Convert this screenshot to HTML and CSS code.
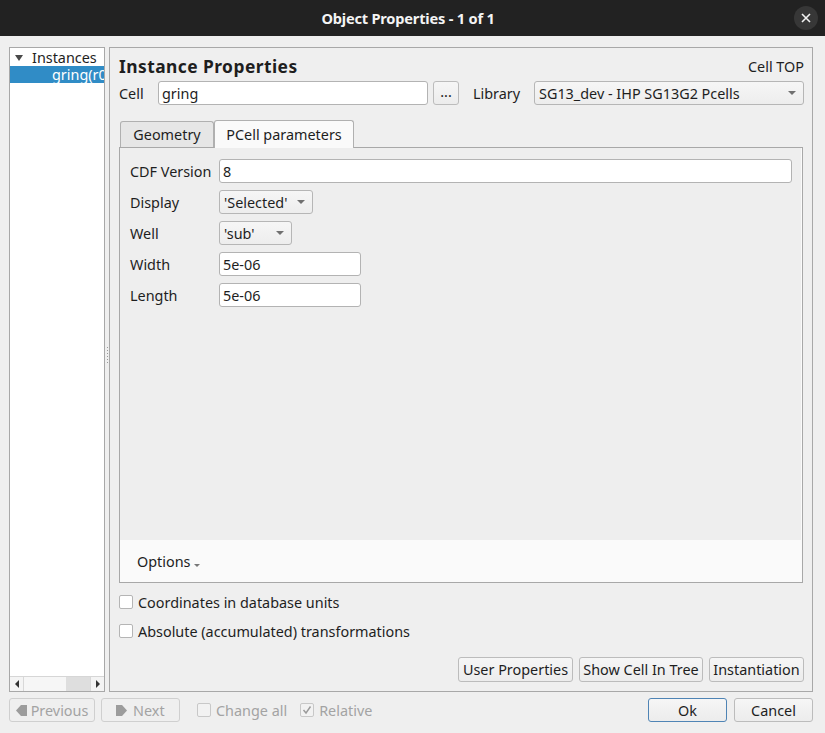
FILE: index.html
```html
<!DOCTYPE html>
<html>
<head>
<meta charset="utf-8">
<link rel="stylesheet" href="styles.css">
</head>
<body>
<div class="window">
  <div class="titlebar">
    <div></div>
    <div class="title">Object Properties - 1 of 1</div>
    <div class="close-wrap"><div class="close"><svg width="10" height="10" viewBox="0 0 10 10"><path d="M1 1L9 9M9 1L1 9" stroke="#f2f2f2" stroke-width="1.6"/></svg></div></div>
  </div>

  <div class="main">
    <div class="tree">
      <div class="tree-body">
        <div class="tree-row"><span class="twisty"></span><span>Instances</span></div>
        <div class="tree-row selected"><span class="child">gring(r0</span></div>
      </div>
      <div class="hscroll">
        <div class="sb-btn"><span class="sb-left"></span></div>
        <div class="sb-track"><div class="sb-thumb"></div></div>
        <div class="sb-btn"><span class="sb-right"></span></div>
      </div>
    </div>

    <div class="splitter"><div class="dots"><i></i><i></i><i></i><i></i><i></i><i></i></div></div>

    <div class="group">
      <div class="header-row">
        <div class="heading">Instance Properties</div>
        <div class="celltop">Cell TOP</div>
      </div>
      <div class="cell-row">
        <span class="lbl-cell">Cell</span>
        <div class="input cell-input">gring</div>
        <div class="btn dots-btn">...</div>
        <span class="lbl-lib">Library</span>
        <div class="combo lib-combo"><span>SG13_dev - IHP SG13G2 Pcells</span><span class="arrow"></span></div>
      </div>

      <div class="tabs">
        <div class="tab">Geometry</div>
        <div class="tab active">PCell parameters</div>
      </div>
      <div class="pane">
        <div class="params">
          <div class="prow"><span class="plabel">CDF Version</span><div class="input wide">8</div></div>
          <div class="prow"><span class="plabel">Display</span><div class="combo disp"><span>'Selected'</span><span class="arrow"></span></div></div>
          <div class="prow"><span class="plabel">Well</span><div class="combo well"><span>'sub'</span><span class="arrow"></span></div></div>
          <div class="prow"><span class="plabel">Width</span><div class="input num">5e-06</div></div>
          <div class="prow"><span class="plabel">Length</span><div class="input num">5e-06</div></div>
        </div>
        <div class="options"><span>Options</span><span class="opt-arrow"></span></div>
      </div>

      <div class="check-row first"><span class="cbox"></span><span>Coordinates in database units</span></div>
      <div class="check-row second"><span class="cbox"></span><span>Absolute (accumulated) transformations</span></div>

      <div class="btn-row">
        <div class="btn b-user">User Properties</div>
        <div class="btn b-show">Show Cell In Tree</div>
        <div class="btn b-inst">Instantiation</div>
      </div>
    </div>
  </div>

  <div class="bottom">
    <div class="btn disabled b-prev"><svg width="11" height="13" viewBox="0 0 11 13"><polygon points="0,6.5 5,1 11,1 11,12 5,12" fill="#9c9c9c"/></svg><span>Previous</span></div>
    <div class="btn disabled b-next"><svg width="11" height="13" viewBox="0 0 11 13"><polygon points="11,6.5 6,1 0,1 0,12 6,12" fill="#9c9c9c"/></svg><span>Next</span></div>
    <div class="dis-check change"><span class="cbox dim"></span><span>Change all</span></div>
    <div class="dis-check rel"><span class="cbox dim"><svg width="12" height="12" viewBox="0 0 12 12"><polyline points="2.5,6 5,9 9.5,2.5" fill="none" stroke="#9a9a9a" stroke-width="1.4"/></svg></span><span>Relative</span></div>
    <div class="spacer"></div>
    <div class="btn ok">Ok</div>
    <div class="btn cancel">Cancel</div>
  </div>
</div>
</body>
</html>
```

FILE: styles.css
```css
* { box-sizing: border-box; }
html, body { margin: 0; padding: 0; }
body {
  width: 825px;
  height: 733px;
  overflow: hidden;
  background: #efefef;
  font-family: "Noto Sans", "Open Sans", sans-serif;
  font-size: 14.4px;
  color: #1e1e1e;
}
.window { width: 825px; height: 733px; display: flex; flex-direction: column; }

.titlebar {
  height: 36px;
  background: #222222;
  display: grid;
  grid-template-columns: 1fr auto 1fr;
  align-items: center;
  flex: none;
}
.title { color: #f4f4f4; font-weight: bold; font-size: 14.6px; letter-spacing: -0.2px; margin-right: 9px; }
.close-wrap { display: flex; justify-content: flex-end; padding-right: 7px; }
.close {
  width: 24px; height: 24px; border-radius: 50%;
  background: #373737;
  display: flex; align-items: center; justify-content: center;
}

.main {
  display: flex;
  padding: 11px 12px 0 9px;
  height: 656px;
  flex: none;
}

.tree {
  width: 96px;
  height: 645px;
  border: 1px solid #a8a8a8;
  background: #ffffff;
  display: flex;
  flex-direction: column;
  overflow: hidden;
}
.tree-body { flex: 1; padding-top: 1px; }
.tree-row { height: 17px; display: flex; align-items: center; white-space: nowrap; overflow: hidden; }
.twisty {
  width: 0; height: 0;
  border-left: 4px solid transparent;
  border-right: 4px solid transparent;
  border-top: 6px solid #4a4a4a;
  margin-left: 5px; margin-right: 9px;
}
.tree-row.selected { background: #308cc6; color: #ffffff; }
.child { padding-left: 42px; }

.hscroll { height: 15px; border-top: 1px solid #d6d6d6; display: flex; background: #efefef; flex: none; }
.sb-btn { width: 13px; display: flex; align-items: center; justify-content: center; background: #f4f4f4; }
.sb-left { width: 0; height: 0; border-top: 4px solid transparent; border-bottom: 4px solid transparent; border-right: 4px solid #333; }
.sb-right { width: 0; height: 0; border-top: 4px solid transparent; border-bottom: 4px solid transparent; border-left: 4px solid #333; }
.sb-track { flex: 1; border-left: 1px solid #d8d8d8; border-right: 1px solid #d8d8d8; background: #f6f6f6; display: flex; justify-content: flex-end; }
.sb-thumb { width: 24px; background: #dedede; }

.splitter { width: 4px; display: flex; align-items: center; justify-content: center; }
.dots { display: flex; flex-direction: column; gap: 2px; margin-top: -30px; }
.dots i { display: block; width: 1px; height: 1px; background: #9a9a9a; }

.group {
  width: 704px;
  height: 645px;
  border: 1px solid #a8a8a8;
  padding: 7px 8px 0 9px;
  display: flex;
  flex-direction: column;
}
.header-row { height: 22px; display: flex; align-items: center; justify-content: space-between; }
.heading { font-weight: bold; font-size: 17.4px; letter-spacing: 0.45px; }
.celltop { padding-right: 0; }

.cell-row { margin-top: 4px; height: 24px; display: flex; align-items: center; }
.lbl-cell { width: 39px; }
.input {
  height: 24px;
  background: #ffffff;
  border: 1px solid #b3b3b3;
  border-radius: 3px;
  padding-left: 3px;
  display: flex; align-items: center;
}
.cell-input { width: 270px; }
.btn {
  height: 24px;
  border: 1px solid #bcbcbc;
  border-radius: 3px;
  background: linear-gradient(#f6f6f6, #ececec);
  display: flex; align-items: center; justify-content: center;
  white-space: nowrap;
}
.dots-btn { width: 26px; margin-left: 5px; padding-bottom: 3px; }
.lbl-lib { margin-left: 14px; width: 61px; }
.combo {
  height: 24px;
  border: 1px solid #b6b6b6;
  border-radius: 3px;
  background: linear-gradient(#f6f6f6, #ededed);
  display: flex; align-items: center; justify-content: space-between;
  padding: 0 7px 0 4px;
  white-space: nowrap;
}
.lib-combo { width: 270px; }
.arrow { width: 0; height: 0; border-left: 4px solid transparent; border-right: 4px solid transparent; border-top: 4px solid #707070; flex: none; }

.tabs { margin-top: 15px; height: 27px; display: flex; align-items: flex-end; padding-left: 1px; position: relative; z-index: 1; }
.tab {
  height: 26px;
  border: 1px solid #b0b0b0;
  border-bottom: none;
  border-radius: 3px 3px 0 0;
  background: #e6e6e6;
  display: flex; align-items: center; justify-content: center;
  white-space: nowrap;
}
.tabs .tab:first-child { width: 94px; }
.tab.active { width: 140px; height: 28px; background: #fafafa; margin-bottom: -1px; }

.pane {
  height: 436px;
  border: 1px solid #a8a8a8;
  background: #fafafa;
  display: flex; flex-direction: column;
  margin-right: 1px;
}
.params { flex: 1; background: #eeeeee; padding: 11px 9px 0 10px; display: flex; flex-direction: column; gap: 7px; margin-right: 1px; }
.prow { display: flex; align-items: center; height: 24px; }
.plabel { width: 89px; white-space: nowrap; }
.wide { flex: 1; }
.num { width: 142px; }
.disp { width: 94px; }
.well { width: 73px; }
.options { height: 42px; display: flex; align-items: center; padding-left: 17px; }
.opt-arrow { width: 0; height: 0; border-left: 3px solid transparent; border-right: 3px solid transparent; border-top: 3px solid #777; margin-left: 3px; margin-top: 9px; }

.check-row { height: 18px; display: flex; align-items: center; white-space: nowrap; }
.check-row.first { margin-top: 10px; }
.check-row.second { margin-top: 11px; }
.cbox {
  width: 14px; height: 14px;
  border: 1px solid #b5b5b5;
  border-radius: 2px;
  background: #ffffff;
  margin-right: 5px;
  display: flex; align-items: center; justify-content: center;
  flex: none;
}

.btn-row { margin-top: 17px; display: flex; justify-content: flex-end; gap: 6px; }
.btn-row .btn { height: 25px; }
.b-user { width: 115px; }
.b-show { width: 124px; }
.b-inst { width: 95px; }

.bottom { display: flex; align-items: center; padding: 6px 12px 0 9px; height: 30px; }
.btn.disabled { color: #a3a3a3; border-color: #cfcfcf; background: #efefef; }
.b-prev { width: 86px; gap: 4px; }
.b-next { width: 79px; margin-left: 6px; gap: 6px; justify-content: flex-start; padding-left: 14px; }
.dis-check { display: flex; align-items: center; color: #a3a3a3; white-space: nowrap; }
.change { margin-left: 17px; }
.rel { margin-left: 13px; }
.cbox.dim { border-color: #c8c8c8; background: #f2f2f2; }
.spacer { flex: 1; }
.ok { width: 79px; border-color: #4f84b5; }
.cancel { width: 79px; margin-left: 7px; }
```
